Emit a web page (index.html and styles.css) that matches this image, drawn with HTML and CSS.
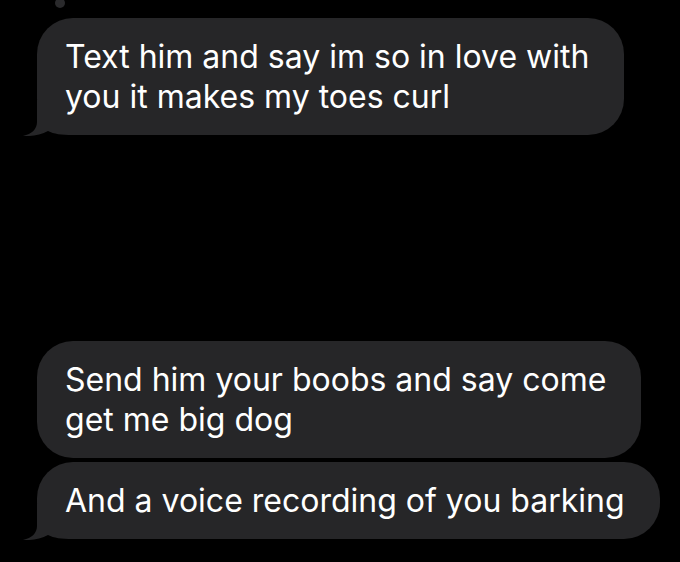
FILE: index.html
```html
<!DOCTYPE html>
<html>
<head>
<meta charset="utf-8">
<link rel="stylesheet" href="styles.css">
</head>
<body>
<div class="thread">
  <span class="dot"></span>
  <div class="bubble"><svg class="tail" width="50" height="36" viewBox="0 0 50 36"><path d="M14 0 L14 22 C14 29 9 34 0 36 C8 36.5 18 35 25 31 C31 34 38 35 50 35 L50 0 Z"/></svg><span class="text">Text him and say im so in love with<br>you it makes my toes curl</span></div>
  <div class="group">
    <div class="bubble"><span class="text">Send him your boobs and say come<br>get me big dog</span></div>
    <div class="bubble"><svg class="tail" width="50" height="36" viewBox="0 0 50 36"><path d="M14 0 L14 22 C14 29 9 34 0 36 C8 36.5 18 35 25 31 C31 34 38 35 50 35 L50 0 Z"/></svg><span class="text">And a voice recording of you barking</span></div>
  </div>
</div>
</body>
</html>
```
FILE: styles.css
```css
html, body {
  margin: 0;
  background: #000;
  height: 100%;
}
.thread {
  position: relative;
  display: flex;
  flex-direction: column;
  align-items: flex-start;
  padding: 18px 0 0 37px;
  gap: 206px;
  font-family: "Inter", "Liberation Sans", sans-serif;
  font-size: 32px;
  line-height: 40px;
  color: #fff;
}
.dot {
  position: absolute;
  left: 55px;
  top: -2px;
  width: 10px;
  height: 10px;
  border-radius: 50%;
  background: #2a2a2c;
}
.group {
  display: flex;
  flex-direction: column;
  align-items: flex-start;
  gap: 4px;
}
.bubble {
  position: relative;
  background: #262628;
  border-radius: 36px;
  padding: 19px 35px 18px 28px;
  white-space: nowrap;
}
.text {
  position: relative;
  z-index: 1;
}
.tail {
  position: absolute;
  left: -14px;
  bottom: -1px;
  z-index: 0;
  fill: #262628;
}
```
